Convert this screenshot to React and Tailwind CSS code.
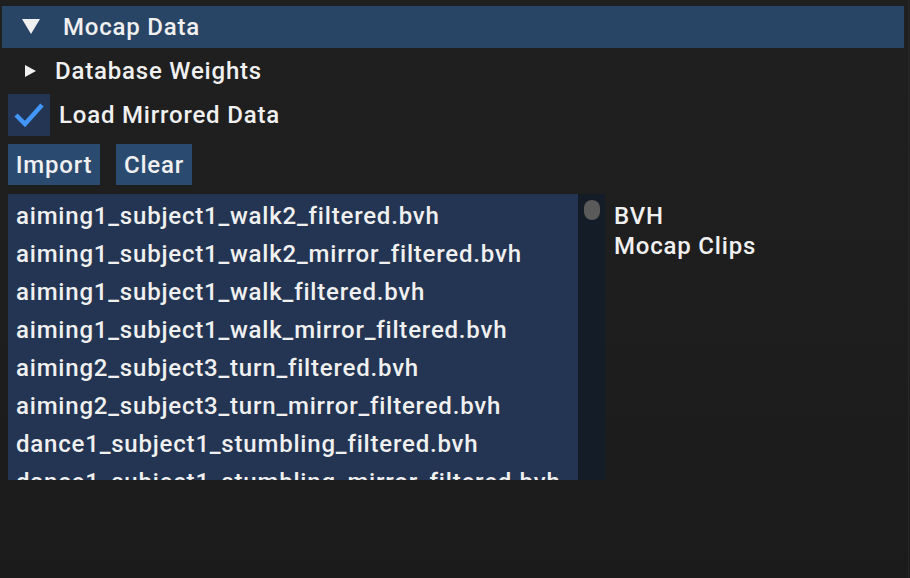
import React from "react";

const files = [
  "aiming1_subject1_walk2_filtered.bvh",
  "aiming1_subject1_walk2_mirror_filtered.bvh",
  "aiming1_subject1_walk_filtered.bvh",
  "aiming1_subject1_walk_mirror_filtered.bvh",
  "aiming2_subject3_turn_filtered.bvh",
  "aiming2_subject3_turn_mirror_filtered.bvh",
  "dance1_subject1_stumbling_filtered.bvh",
  "dance1_subject1_stumbling_mirror_filtered.bvh",
];

export default function App() {
  return (
    <div
      className="w-[910px] h-[578px] overflow-hidden bg-gradient-to-b from-[#1f1f1f] via-[#1e1e1e] to-[#1b1b1b] text-[#f0f0f0] text-[24px] leading-none font-medium tracking-[0.8px]"
      style={{ fontFamily: "Roboto, 'Noto Sans', sans-serif" }}
    >
      <div className="w-[909px] h-full border-r border-[#262626] pt-[6px] flex flex-col">
        {/* Header */}
        <div className="ml-[2px] w-[902px] h-[42px] bg-[#294566] flex items-center">
          <svg width="18" height="15" viewBox="0 0 18 15" className="ml-[20px] mt-[-1px]">
            <polygon points="0,0 18,0 9,15" fill="#f0f0f0" />
          </svg>
          <span className="ml-[23px]">Mocap Data</span>
        </div>
        {/* Database Weights */}
        <div className="h-[46px] flex items-center">
          <svg width="11" height="12" viewBox="0 0 11 12" className="ml-[25px]">
            <polygon points="0,0 11,6 0,12" fill="#f0f0f0" />
          </svg>
          <span className="ml-[19px]">Database Weights</span>
        </div>
        {/* Checkbox */}
        <div className="h-[42px] flex items-center">
          <div className="ml-[8px] w-[42px] h-[42px] bg-[#233552] flex items-center justify-center">
            <svg width="32" height="26" viewBox="0 0 32 26">
              <polyline points="3,13 12,22 29,3" fill="none" stroke="#4296fa" strokeWidth="4.5" />
            </svg>
          </div>
          <span className="ml-[9px]">Load Mirrored Data</span>
        </div>
        {/* Buttons */}
        <div className="mt-[8px] ml-[8px] flex gap-[16px]">
          <button className="w-[92px] h-[41px] bg-[#2a4a70] text-[#f0f0f0] flex items-center justify-center">Import</button>
          <button className="w-[76px] h-[41px] bg-[#2a4a70] text-[#f0f0f0] flex items-center justify-center">Clear</button>
        </div>
        {/* List + label */}
        <div className="mt-[9px] flex">
          <div className="ml-[8px] w-[597px] h-[286px] flex overflow-hidden">
            <div className="w-[570px] bg-[#233552] pt-[3px] overflow-hidden">
              {files.map((f) => (
                <div key={f} className="h-[38px] flex items-center pl-[8px] whitespace-nowrap">
                  {f}
                </div>
              ))}
            </div>
            <div className="w-[27px] bg-[#141c28] pt-[6px] pl-[6px]">
              <div className="w-[16px] h-[20px] rounded-[8px] bg-[#5a5a5a]" />
            </div>
          </div>
          <div className="ml-[9px] pt-[7px] leading-[30px]">
            <div>BVH</div>
            <div>Mocap Clips</div>
          </div>
        </div>
      </div>
    </div>
  );
}
